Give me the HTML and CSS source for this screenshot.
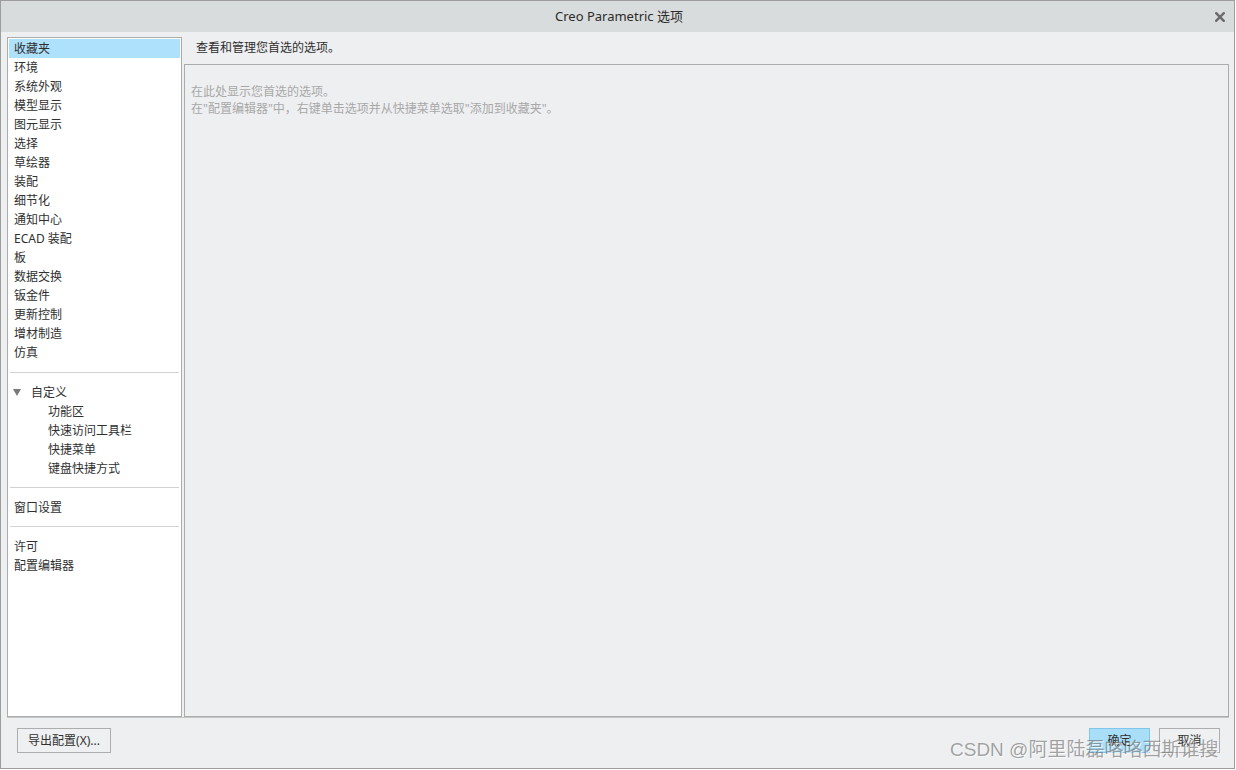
FILE: index.html
```html
<!DOCTYPE html>
<html lang="zh">
<head>
<meta charset="utf-8">
<title>Creo Parametric 选项</title>
<link rel="stylesheet" href="styles.css">
</head>
<body>
<div class="window">
  <div class="titlebar">
    <span class="title">Creo Parametric 选项</span>
    <svg class="close" width="10" height="10" viewBox="0 0 10 10" aria-label="关闭">
      <path d="M1.2 1.2 L8.8 8.8 M8.8 1.2 L1.2 8.8" stroke="#6b6b6b" stroke-width="2.4" stroke-linecap="square" fill="none"/>
    </svg>
  </div>
  <div class="main">
    <div class="nav">
      <ul class="group">
        <li class="item selected">收藏夹</li>
        <li class="item">环境</li>
        <li class="item">系统外观</li>
        <li class="item">模型显示</li>
        <li class="item">图元显示</li>
        <li class="item">选择</li>
        <li class="item">草绘器</li>
        <li class="item">装配</li>
        <li class="item">细节化</li>
        <li class="item">通知中心</li>
        <li class="item">ECAD 装配</li>
        <li class="item">板</li>
        <li class="item">数据交换</li>
        <li class="item">钣金件</li>
        <li class="item">更新控制</li>
        <li class="item">增材制造</li>
        <li class="item">仿真</li>
      </ul>
      <div class="sep first"></div>
      <ul class="group">
        <li class="item parent"><span class="tri"></span>自定义</li>
        <li class="item sub">功能区</li>
        <li class="item sub">快速访问工具栏</li>
        <li class="item sub">快捷菜单</li>
        <li class="item sub">键盘快捷方式</li>
      </ul>
      <div class="sep"></div>
      <ul class="group">
        <li class="item">窗口设置</li>
      </ul>
      <div class="sep"></div>
      <ul class="group">
        <li class="item">许可</li>
        <li class="item">配置编辑器</li>
      </ul>
    </div>
    <div class="content">
      <div class="heading">查看和管理您首选的选项。</div>
      <div class="box">
        <p class="hint">在此处显示您首选的选项。</p>
        <p class="hint">在"配置编辑器"中，右键单击选项并从快捷菜单选取"添加到收藏夹"。</p>
      </div>
    </div>
  </div>
  <div class="divider"></div>
  <div class="footer">
    <button class="btn export">导出配置(X)...</button>
    <div class="actions">
      <button class="btn ok">确定</button>
      <button class="btn">取消</button>
    </div>
  </div>
  <div class="watermark">CSDN @阿里陆磊咯咯西斯谁搜</div>
</div>
</body>
</html>
```

FILE: styles.css
```css
* { box-sizing: border-box; }
html, body {
  margin: 0;
  padding: 0;
  background: #ffffff;
}
body {
  font-family: "Noto Sans", "Noto Sans CJK SC", sans-serif;
  font-size: 12px;
  color: #333333;
}
.window {
  position: relative;
  width: 1235px;
  height: 769px;
  border: 1px solid #9d9d9d;
  background: #eeeff1;
  display: flex;
  flex-direction: column;
}
.titlebar {
  position: relative;
  height: 31px;
  background: #d9dcdd;
  display: flex;
  align-items: center;
  justify-content: center;
  flex: none;
}
.title {
  font-size: 13px;
  color: #2b2b2b;
  line-height: 31px;
  margin-left: 3px;
}
.close {
  position: absolute;
  right: 9px;
  top: 11px;
}
.main {
  display: flex;
  padding: 5px 5px 0 6px;
  gap: 2px;
  height: 685px;
  flex: none;
}
.nav {
  width: 175px;
  height: 680px;
  background: #ffffff;
  border: 1px solid #acacac;
  padding: 1px 1px;
}
.group {
  list-style: none;
  margin: 0;
  padding: 0;
}
.item {
  height: 19px;
  line-height: 19px;
  padding-left: 5px;
  color: #303030;
  white-space: nowrap;
}
.item.selected {
  background: #aee1fb;
}
.item.parent {
  padding-left: 3px;
  display: flex;
  align-items: center;
}
.tri {
  width: 0;
  height: 0;
  border-left: 4px solid transparent;
  border-right: 4px solid transparent;
  border-top: 7px solid #7a7a7a;
  margin-right: 10px;
  margin-left: 1px;
}
.item.sub {
  padding-left: 39px;
}
.sep {
  height: 1px;
  background: #d2d2d2;
  margin: 9px 1px 10px 1px;
}
.sep.first {
  margin: 10px 1px 10px 1px;
}
.content {
  width: 1045px;
  display: flex;
  flex-direction: column;
}
.heading {
  height: 27px;
  line-height: 22px;
  padding-left: 12px;
  color: #2e2e2e;
}
.box {
  height: 653px;
  border: 1px solid #acacac;
  background: #eeeff1;
  padding: 18px 6px 0 6px;
}
.hint {
  margin: 0;
  line-height: 17px;
  color: #a8a8a8;
}
.divider {
  height: 1px;
  background: #c4c4c4;
  margin: 0 5px 0 6px;
  flex: none;
}
.footer {
  display: flex;
  justify-content: space-between;
  align-items: flex-start;
  padding: 10px 14px 0 16px;
  flex: 1;
}
.btn {
  height: 25px;
  width: 61px;
  font-family: "Noto Sans", "Noto Sans CJK SC", sans-serif;
  font-size: 12px;
  color: #303030;
  background: #eff0f1;
  border: 1px solid #adadad;
  padding: 0;
  line-height: 23px;
}
.btn.export {
  width: 94px;
}
.btn.ok {
  background: #a9def9;
  border-color: #7fc5ec;
}
.actions {
  display: flex;
  gap: 9px;
}
.watermark {
  position: absolute;
  left: 949px;
  top: 736px;
  font-size: 19px;
  line-height: 26px;
  color: rgba(90, 90, 90, 0.55);
  text-shadow: 1px 1px 0 rgba(255, 255, 255, 0.7);
  white-space: nowrap;
  font-family: "Liberation Sans", "Noto Sans CJK SC", sans-serif;
  pointer-events: none;
}
```
